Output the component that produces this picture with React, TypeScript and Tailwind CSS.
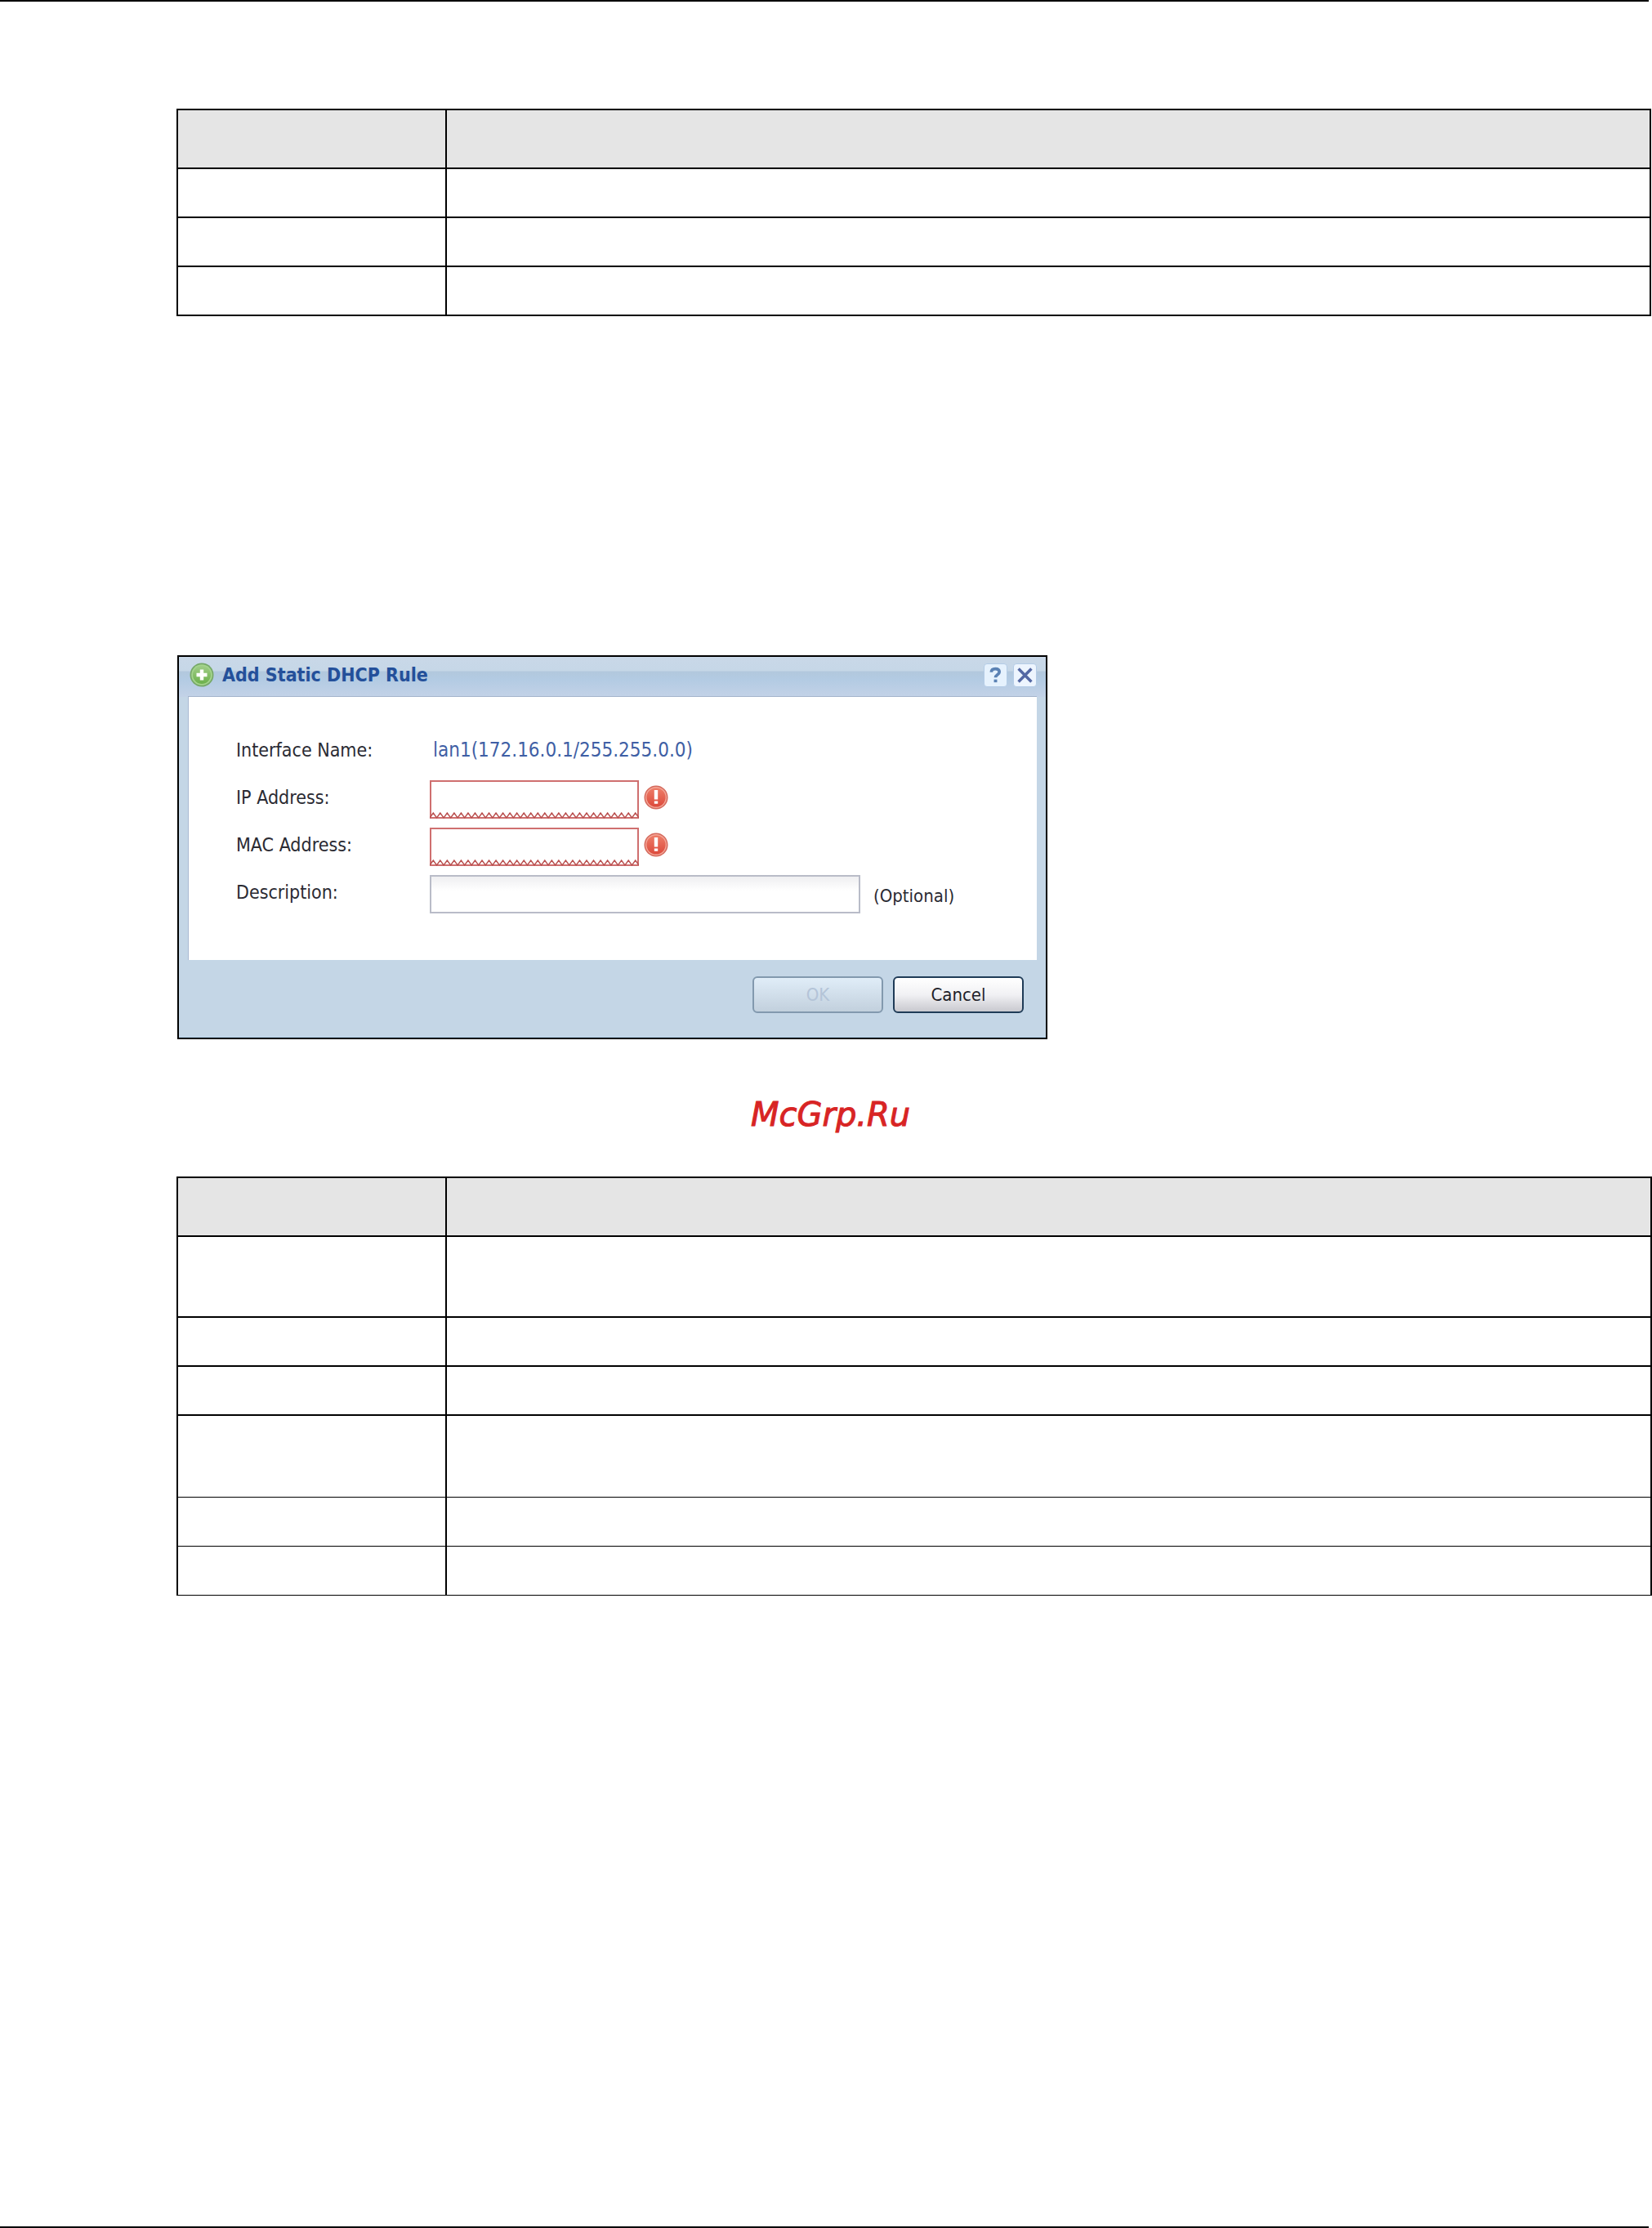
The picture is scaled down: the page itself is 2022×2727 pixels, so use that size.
import type { ReactNode } from "react";

type RowSpec = {
  size: "short" | "tall" | "taller";
  line: "thick" | "thin";
};

const topRows: RowSpec[] = [
  { size: "short", line: "thick" },
  { size: "short", line: "thick" },
  { size: "short", line: "thick" },
];

const bottomRows: RowSpec[] = [
  { size: "tall", line: "thick" },
  { size: "short", line: "thick" },
  { size: "short", line: "thick" },
  { size: "taller", line: "thin" },
  { size: "short", line: "thin" },
  { size: "short", line: "thin" },
];

const rowHeights = {
  short: "h-[60px]",
  tall: "h-[99px]",
  taller: "h-[100px]",
};

const rowLines = {
  thick: "border-b-2",
  thin: "border-b",
};

function LabelTable({ rows }: { rows: RowSpec[] }) {
  return (
    <table className="w-full table-fixed border-separate border-spacing-0 border-t-2 border-l-2 border-black">
      <colgroup>
        <col className="w-[329px]" />
        <col />
      </colgroup>
      <thead>
        <tr className="h-[72px] bg-[#e5e5e5]">
          <th className="border-r-2 border-b-2 border-black" />
          <th className="border-r-2 border-b-2 border-black" />
        </tr>
      </thead>
      <tbody>
        {rows.map((row, i) => (
          <tr key={i} className={rowHeights[row.size]}>
            <td className={`border-r-2 border-black ${rowLines[row.line]}`} />
            <td className={`border-r-2 border-black ${rowLines[row.line]}`} />
          </tr>
        ))}
      </tbody>
    </table>
  );
}

function AddIcon() {
  return (
    <svg viewBox="0 0 30 30" className="size-[30px]" aria-hidden="true">
      <defs>
        <linearGradient id="add-fill" x1="0" y1="0" x2="0" y2="1">
          <stop offset="0" stopColor="#a0cd88" />
          <stop offset="1" stopColor="#6cb04c" />
        </linearGradient>
      </defs>
      <circle cx="15" cy="15" r="14.5" fill="#76a868" />
      <circle cx="15" cy="15" r="12.8" fill="#a4d48c" />
      <circle cx="15" cy="15" r="11" fill="url(#add-fill)" />
      <path d="M15 8.5v13M8.5 15h13" stroke="#fff" strokeWidth="4.4" />
    </svg>
  );
}

function ErrorIcon() {
  return (
    <svg viewBox="0 0 30 30" className="size-[30px]" role="img" aria-label="Required">
      <defs>
        <linearGradient id="error-fill" x1="0" y1="0" x2="0" y2="1">
          <stop offset="0" stopColor="#ee7d68" />
          <stop offset="1" stopColor="#dc4a3c" />
        </linearGradient>
      </defs>
      <circle cx="15" cy="15" r="14.5" fill="#d4695c" />
      <circle cx="15" cy="15" r="13" fill="#f4a596" />
      <circle cx="15" cy="15" r="11.6" fill="url(#error-fill)" />
      <path d="M12.8 6h4.4v11.6h-4.4zM12.8 19.4h4.4v3.4h-4.4z" fill="#fff" />
    </svg>
  );
}

const TEETH = 30;

function Squiggle() {
  let d = "M0 7";
  for (let i = 0; i < TEETH; i++) {
    d += "l4.25 -6l4.25 6";
  }

  return (
    <svg
      viewBox="0 0 255 8"
      preserveAspectRatio="none"
      className="pointer-events-none absolute inset-x-0 bottom-0 h-2 w-full"
      aria-hidden="true"
    >
      <path d={d} fill="none" stroke="#b9504f" strokeWidth="1.4" />
    </svg>
  );
}

function FormRow({
  id,
  label,
  children,
}: {
  id: string;
  label: string;
  children: ReactNode;
}) {
  return (
    <div className="flex h-[47px] items-start">
      <label htmlFor={id} className="w-[237px] shrink-0 leading-[43px]">
        {label}
      </label>
      {children}
    </div>
  );
}

function RequiredInput({ id }: { id: string }) {
  return (
    <div className="flex items-start gap-[6px]">
      <div className="relative">
        <input
          id={id}
          type="text"
          required
          className="block h-[47px] w-[256px] border-2 border-[#cf6f6f] bg-white px-2 outline-none"
        />
        <Squiggle />
      </div>
      <div className="pt-[6px]">
        <ErrorIcon />
      </div>
    </div>
  );
}

function StaticDhcpDialog() {
  return (
    <section
      aria-labelledby="dialog-title"
      className="w-[1065px] border-2 border-black bg-[#c4d6e6] font-['DejaVu_Sans_Condensed','DejaVu_Sans',sans-serif] text-[23px] text-[#2b2b33]"
    >
      <header className="flex h-[49px] items-center justify-between bg-[linear-gradient(to_bottom,#c9d8e8_0px,#c6d7e7_17px,#b2c8dd_18px,#b3cbe3_28px,#c3d2e7_49px)] px-[11px] pb-[5px]">
        <div className="flex items-center gap-[10px] pl-[2px]">
          <AddIcon />
          <h2 id="dialog-title" className="font-bold text-[#24509a]">
            Add Static DHCP Rule
          </h2>
        </div>
        <div className="flex gap-[7px]">
          <button
            type="button"
            aria-label="Help"
            className="flex size-[29px] items-center justify-center rounded-[4px] border border-[#b4cce6] bg-[#e6f2fd]"
          >
            <svg viewBox="0 0 29 29" className="size-[27px]" aria-hidden="true">
              <path
                d="M9 10.5c0-3 2-4.500 5.200-4.500 3.200 0 5.300 1.600 5.300 4.200 0 3.600-5 3.400-5 7.300"
                fill="none"
                stroke="#5b82b4"
                strokeWidth="4"
              />
              <path d="M12.400 20h4.200v3.800h-4.200z" fill="#5b82b4" />
            </svg>
          </button>
          <button
            type="button"
            aria-label="Close"
            className="flex size-[29px] items-center justify-center rounded-[4px] border border-[#b4cce6] bg-[#edf5fe]"
          >
            <svg viewBox="0 0 29 29" className="size-[27px]" aria-hidden="true">
              <path d="M6 6l17 17M23 6l-17 17" stroke="#5468a4" strokeWidth="3.800" />
            </svg>
          </button>
        </div>
      </header>

      <form>
        <div className="mx-[11px] flex flex-col gap-[11px] border-l border-[#a9b9d2] bg-white pt-11 pb-[57px] pl-[58px] shadow-[0_-1px_0_#a3b4cb]">
          <div className="flex h-[47px] items-start leading-[43px]">
            <span className="w-[237px] shrink-0">Interface Name:</span>
            <span className="pl-1 text-[24px] text-[#3f5fa5]">lan1(172.16.0.1/255.255.0.0)</span>
          </div>
          <FormRow id="ip" label="IP Address:">
            <RequiredInput id="ip" />
          </FormRow>
          <FormRow id="mac" label="MAC Address:">
            <RequiredInput id="mac" />
          </FormRow>
          <FormRow id="description" label="Description:">
            <input
              id="description"
              type="text"
              className="h-[47px] w-[527px] border-2 border-[#b9bcc8] bg-linear-to-b from-[#efeff1] to-white to-40% px-2 outline-none"
            />
            <span className="pt-[2px] pl-4 text-[22px] leading-[47px]">(Optional)</span>
          </FormRow>
        </div>

        <div className="flex justify-end gap-3 border-b border-[#b3d3ec] pt-5 pr-[27px] pb-[29px]">
          <button
            type="button"
            disabled
            className="h-[45px] w-40 rounded-[6px] border-2 border-[#8299ae] bg-linear-to-b from-[#e0edf8] to-[#c2d0dd] text-[22px] text-[#b4c4d8]"
          >
            OK
          </button>
          <button
            type="button"
            className="h-[45px] w-40 rounded-[6px] border-2 border-[#1f3b57] bg-linear-to-b from-white via-[#f1f1f4] to-[#c9c9cf] text-[22px] text-[#1f1f29]"
          >
            Cancel
          </button>
        </div>
      </form>
    </section>
  );
}

export default function App() {
  return (
    <div className="flex min-h-screen flex-col bg-white">
      <hr className="mr-1 border-t-2 border-black" />

      <main className="pt-[131px] pl-[216px]">
        <div className="pr-px">
          <LabelTable rows={topRows} />
        </div>
        <div className="mt-[415px] pl-px">
          <StaticDhcpDialog />
        </div>
        <p className="pt-[68px] pl-[703px] font-['DejaVu_Sans',sans-serif] text-[40px] leading-[48px] text-[#d82424] italic [-webkit-text-stroke:1px_#d82424]">
          McGrp.Ru
        </p>
        <div className="mt-[52px]">
          <LabelTable rows={bottomRows} />
        </div>
      </main>

      <hr className="mt-auto mr-1 border-t-2 border-black" />
    </div>
  );
}
